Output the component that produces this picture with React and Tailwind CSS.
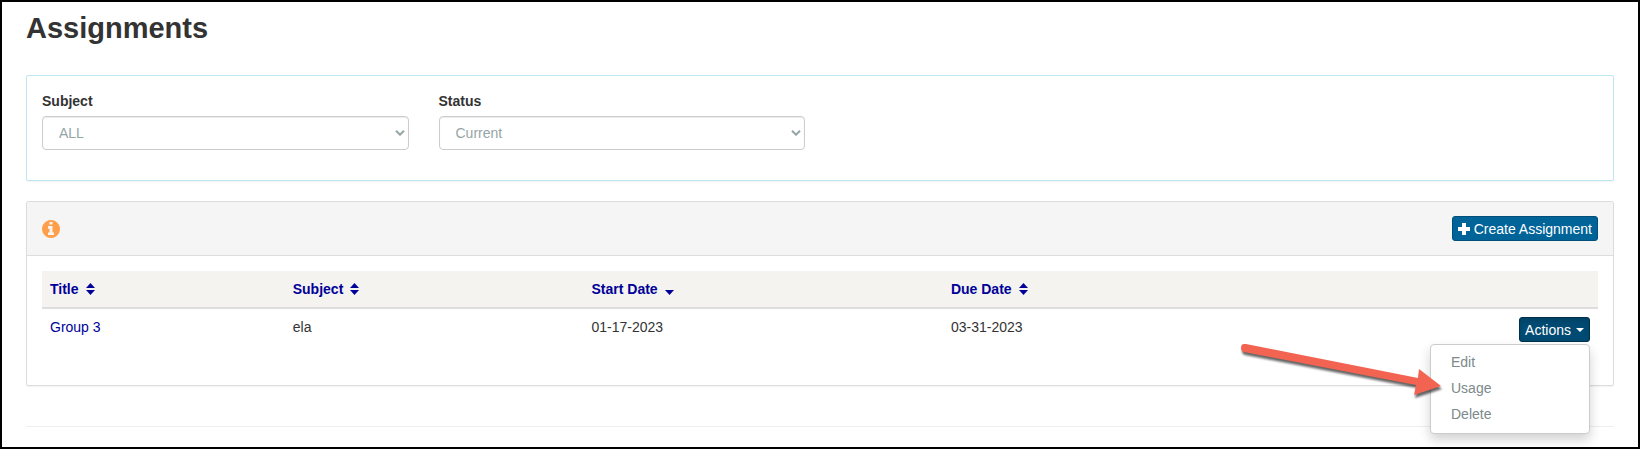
import React from "react";

const columns = [
  { key: "title", label: "Title", sort: "none", width: "w-[15.6%]" },
  { key: "subject", label: "Subject", sort: "none", width: "w-[19.2%]" },
  { key: "startDate", label: "Start Date", sort: "descending", width: "w-[23.1%]" },
  { key: "dueDate", label: "Due Date", sort: "none", width: "w-[23.1%]" },
];

const assignments = [
  {
    id: 1,
    title: "Group 3",
    subject: "ela",
    startDate: "01-17-2023",
    dueDate: "03-31-2023",
  },
];

const InfoIcon = () => (
  <svg
    viewBox="128 128 1536 1536"
    className="w-[18px] h-[18px] text-[#ff9f4a]"
    fill="currentColor"
  >
    <path d="M1152 1376v-160q0-14-9-23t-23-9h-96v-512q0-14-9-23t-23-9h-320q-14 0-23 9t-9 23v160q0 14 9 23t23 9h96v320h-96q-14 0-23 9t-9 23v160q0 14 9 23t23 9h448q14 0 23-9t9-23zM1024 480v-160q0-14-9-23t-23-9h-192q-14 0-23 9t-9 23v160q0 14 9 23t23 9h192q14 0 23-9t9-23zM1664 896q0 209-103 385.5t-279.5 279.5-385.5 103-385.5-103-279.5-279.5-103-385.5 103-385.5 279.5-279.5 385.5-103 385.5 103 279.5 279.5 103 385.5z" />
  </svg>
);

// Both carets when unsorted, only the lower one when descending
const SortIcon = ({ sort }) => (
  <svg viewBox="0 0 9 12" className="w-[9px] h-3" fill="currentColor">
    {sort === "none" && <path d="M0 5 4.5 0 9 5z" />}
    <path d="M0 7h9l-4.5 5z" />
  </svg>
);

const FilterSelect = ({ id, label, options }) => (
  <div>
    <label htmlFor={id} className="block mb-[5px] font-bold leading-5">
      {label}
    </label>
    <div className="relative">
      <select
        id={id}
        className="block w-full h-[34px] pl-4 pr-6 appearance-none rounded border border-[#cccccc] bg-white text-[#95a5a6] shadow-[inset_0_1px_1px_rgba(0,0,0,0.08)]"
      >
        {options.map((option) => (
          <option key={option}>{option}</option>
        ))}
      </select>
      <svg
        viewBox="0 0 10 6"
        className="absolute right-1 top-3.5 w-2.5 h-1.5 pointer-events-none"
        fill="none"
        stroke="#95a5a6"
        strokeWidth="2"
      >
        <path d="M1 0.8 5 4.7 9 0.8" />
      </svg>
    </div>
  </div>
);

// Callout arrow that points at the Usage item
const Arrow = () => (
  <svg
    viewBox="0 0 206 60"
    className="absolute right-[146px] top-[21px] z-20 w-[206px] h-[60px] overflow-visible pointer-events-none drop-shadow-[1px_3px_1px_rgba(0,0,0,0.6)]"
    fill="#f26451"
  >
    <path d="M6 6 Q3 6 3 10 Q3 13 6 14 L178 47 L176 57 L203 48 L181 31 L180 40 L8 6 Z" />
  </svg>
);

const ActionsMenu = () => (
  <div className="relative inline-block align-top text-left">
    <button
      type="button"
      aria-haspopup="menu"
      aria-expanded="true"
      className="flex items-center gap-[5px] h-[25px] px-[5px] rounded-[3px] border border-[#00304a] bg-[#004b73] text-white shadow-[inset_0_3px_5px_rgba(0,0,0,0.13)]"
    >
      Actions
      <span className="border-x-4 border-t-4 border-x-transparent border-t-white" />
    </button>
    <ul className="absolute right-0 top-[27px] z-10 w-40 pt-1 pb-1.5 rounded border border-[#cccccc] bg-white shadow-[0_6px_12px_rgba(0,0,0,0.18)]">
      {["Edit", "Usage", "Delete"].map((item) => (
        <li key={item}>
          <a href="#" className="block px-5 py-[3px] leading-5 text-[#7b8a8b]">
            {item}
          </a>
        </li>
      ))}
    </ul>
    <Arrow />
  </div>
);

export default function App() {
  return (
    <div className="min-h-screen border-2 border-black bg-white px-6 pt-2 font-['Liberation_Sans',Arial,sans-serif] text-sm leading-5 text-[#333333]">
      <h1 className="text-[29px] leading-9 font-bold">Assignments</h1>

      {/* Filters */}
      <div className="mt-[29px] grid grid-cols-4 gap-[30px] px-[15px] pt-[15px] pb-[30px] rounded-[2px] border border-[#bce8f1] shadow-[0_1px_1px_rgba(0,0,0,0.05)]">
        <FilterSelect id="subject" label="Subject" options={["ALL", "ela", "math"]} />
        <FilterSelect id="status" label="Status" options={["Current", "Past", "Future"]} />
      </div>

      {/* Assignment list */}
      <div className="mt-5 rounded-[2px] border border-[#dddddd] shadow-[0_1px_1px_rgba(0,0,0,0.05)]">
        <div className="flex items-center justify-between h-[54px] px-[15px] border-b border-[#dddddd] bg-[#f5f5f5]">
          <InfoIcon />
          <button
            type="button"
            className="flex items-center gap-1 h-[25px] px-[5px] rounded-[3px] border border-[#004f7a] bg-[#006499] text-white"
          >
            <svg viewBox="0 0 12 12" className="w-3 h-3" fill="currentColor">
              <path d="M4 0h4v4h4v4H8v4H4V8H0V4h4z" />
            </svg>
            Create Assignment
          </button>
        </div>

        <div className="px-[15px] pt-[15px] pb-[35px]">
          <table className="w-full table-fixed border-collapse text-left">
            <thead>
              <tr className="bg-[#f4f3ef] border-b-2 border-[#dddddd] text-[#000099]">
                {columns.map(({ key, label, sort, width }) => (
                  <th key={key} aria-sort={sort} className={`${width} p-2 font-bold`}>
                    <button type="button" className="flex items-center gap-[7px]">
                      {label}
                      <SortIcon sort={sort} />
                    </button>
                  </th>
                ))}
                <td className="p-2" />
              </tr>
            </thead>
            <tbody>
              {assignments.map((row) => (
                <tr key={row.id} className="align-top">
                  <td className="p-2">
                    <a href="#" className="text-[#000099]">
                      {row.title}
                    </a>
                  </td>
                  <td className="p-2">{row.subject}</td>
                  <td className="p-2">{row.startDate}</td>
                  <td className="p-2">{row.dueDate}</td>
                  <td className="p-2 text-right">
                    <ActionsMenu />
                  </td>
                </tr>
              ))}
            </tbody>
          </table>
        </div>
      </div>

      <hr className="mt-10 border-[#eeeeee]" />
    </div>
  );
}
